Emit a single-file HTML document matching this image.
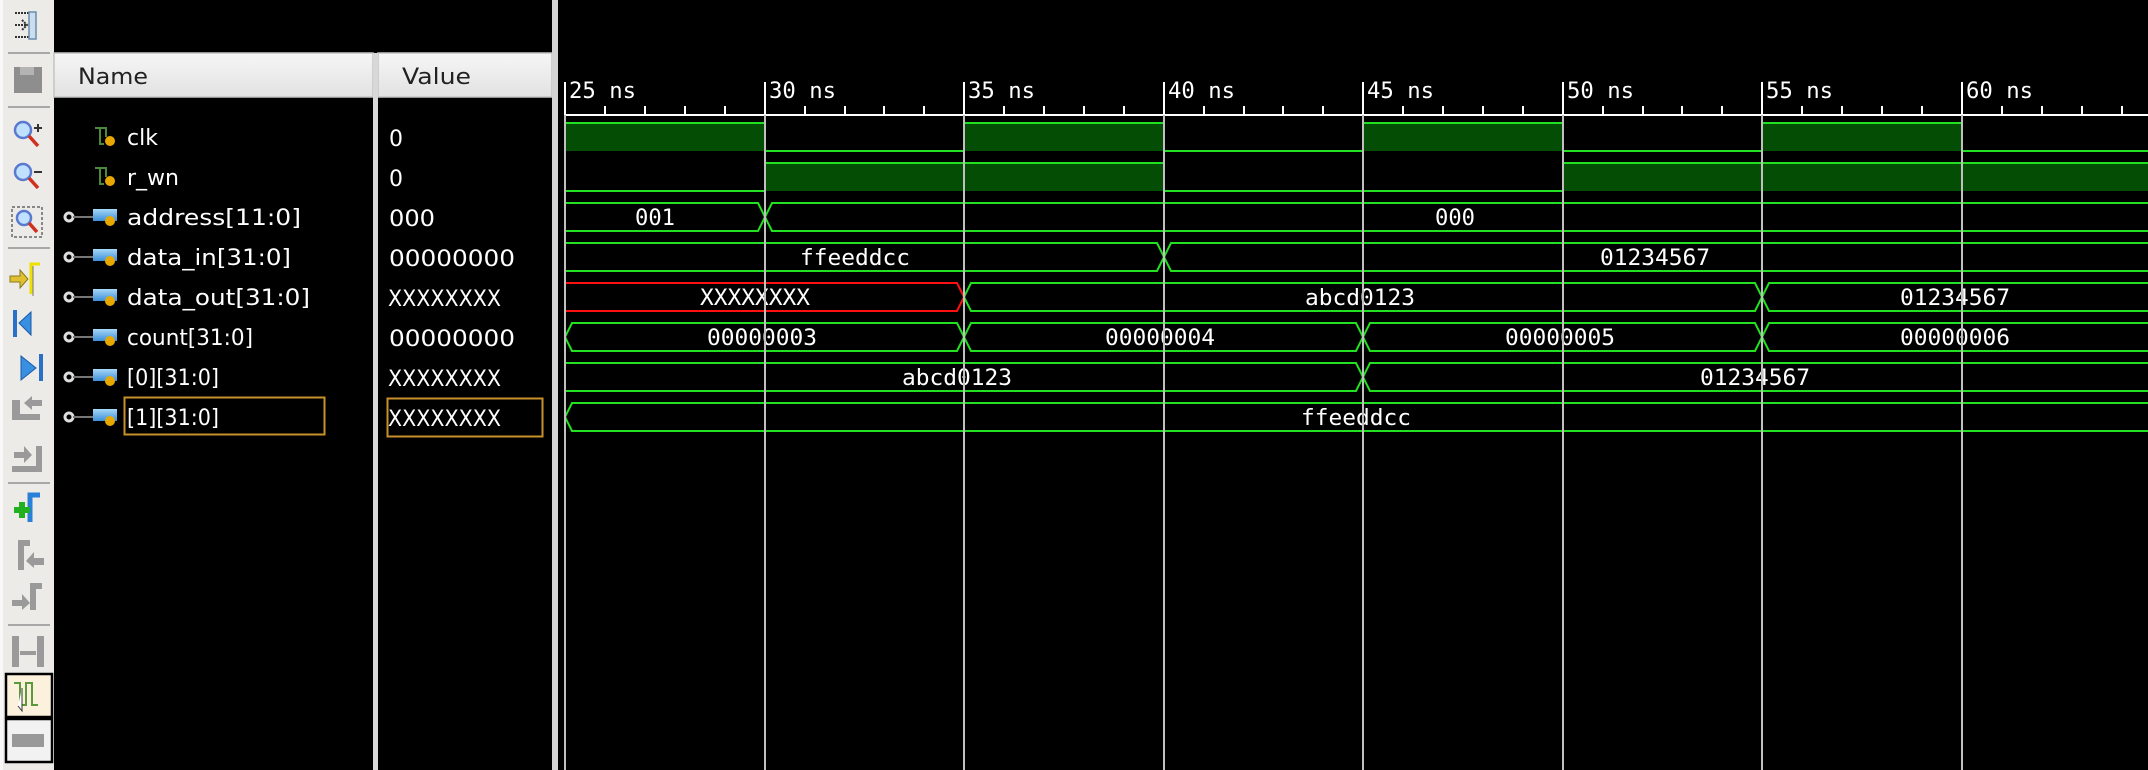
<!DOCTYPE html>
<html><head><meta charset="utf-8"><style>
html,body{margin:0;padding:0;background:#000;width:2148px;height:770px;overflow:hidden}
svg{display:block}
</style></head><body>
<svg width="2148" height="770" viewBox="0 0 2148 770" xmlns="http://www.w3.org/2000/svg">
<defs>
<linearGradient id="hdr" x1="0" y1="0" x2="0" y2="1"><stop offset="0" stop-color="#f6f6f6"/><stop offset="1" stop-color="#e2e2e2"/></linearGradient>
<linearGradient id="blu" x1="0" y1="0" x2="0" y2="1"><stop offset="0" stop-color="#a8d8f8"/><stop offset="1" stop-color="#3a8ed8"/></linearGradient>
<g id="busicon"><circle cx="69" cy="0" r="4" fill="none" stroke="#ddd" stroke-width="3"/><line x1="73" y1="0" x2="93" y2="0" stroke="#777" stroke-width="2"/><rect x="93" y="-8" width="24" height="12" fill="url(#blu)"/><circle cx="110" cy="4" r="5" fill="#e8a800"/></g>
<g id="biticon"><path d="M95,-9 H100 V7 H104 M100,-9 H106 V0" fill="none" stroke="#4a8a3a" stroke-width="2"/><circle cx="110" cy="4" r="5" fill="#e8a800"/></g>
</defs>
<rect x="0" y="0" width="54" height="770" fill="#ecebe8"/>
<rect x="0" y="0" width="3" height="770" fill="#f8f8f8"/>
<g stroke="#a8a8a8" stroke-width="2"><line x1="8" y1="53" x2="50" y2="53"/><line x1="8" y1="107" x2="50" y2="107"/><line x1="8" y1="248" x2="50" y2="248"/><line x1="8" y1="483" x2="50" y2="483"/><line x1="8" y1="625" x2="50" y2="625"/></g>
<path d="M15,13 H30 M15,37 H30 M15,25 H26 M22,20 L27,25 L22,30" stroke="#333" stroke-width="2" fill="none" stroke-dasharray="2 1"/>
<rect x="29" y="12" width="7" height="27" fill="#cde" stroke="#6a8cb0" stroke-width="1.5"/>
<rect x="14" y="67" width="28" height="26" fill="#8e8e8e"/><rect x="20" y="67" width="14" height="8" fill="#b4b4b4"/>
<g><circle cx="23" cy="130" r="8" fill="#bfe0ff" stroke="#5a7ad0" stroke-width="2.5"/><line x1="29" y1="136" x2="38" y2="146" stroke="#d03020" stroke-width="3.5"/><path d="M34,128 H42 M38,124 V132" stroke="#333" stroke-width="2"/></g>
<g><circle cx="23" cy="172" r="8" fill="#bfe0ff" stroke="#5a7ad0" stroke-width="2.5"/><line x1="29" y1="178" x2="38" y2="188" stroke="#d03020" stroke-width="3.5"/><path d="M34,172 H42" stroke="#333" stroke-width="2"/></g>
<rect x="12" y="207" width="30" height="30" fill="none" stroke="#888" stroke-width="2" stroke-dasharray="3 2"/>
<g><circle cx="24" cy="218" r="7" fill="#bfe0ff" stroke="#5a7ad0" stroke-width="2.5"/><line x1="29" y1="223" x2="37" y2="232" stroke="#d03020" stroke-width="3.5"/></g>
<path d="M10,276 H20 V270 L28,279 L20,288 V282 H10 Z" fill="#e0c030" stroke="#8a7a20" stroke-width="1"/><path d="M31,294 V264 H40" fill="none" stroke="#f0e000" stroke-width="3"/><path d="M33,296 V266" stroke="#777" stroke-width="1"/>
<path d="M15,310 V337" stroke="#2a70c8" stroke-width="4"/><path d="M31,312 L19,323 L31,335 Z" fill="#3a90e0" stroke="#1a58a8"/>
<path d="M41,354 V381" stroke="#2a70c8" stroke-width="4"/><path d="M21,356 L36,368 L21,380 Z" fill="#3a90e0" stroke="#1a58a8"/>
<g fill="#9a9a9a"><path d="M12,420 V400 H20 V414 H40 V420 Z"/><path d="M24,403 L32,396 V400 H42 V406 H32 V410 Z"/></g>
<g fill="#9a9a9a"><path d="M12,466 H36 V446 H42 V472 H12 Z"/><path d="M14,452 H24 V446 L32,455 L24,463 V458 H14 Z"/></g>
<path d="M30,522 V495 H40" fill="none" stroke="#2a80d8" stroke-width="5"/><path d="M14,510 H30 M22,502 V518" stroke="#20b020" stroke-width="6"/>
<g fill="#9a9a9a"><path d="M18,570 V540 H30 V546 H24 V570 Z"/><path d="M44,558 H34 V552 L26,561 L34,568 V565 H44 Z"/></g>
<g fill="#9a9a9a"><path d="M42,583 H30 V610 H36 V589 H42 Z"/><path d="M12,600 H22 V594 L30,603 L22,610 V606 H12 Z"/></g>
<g fill="#9a9a9a"><rect x="12" y="636" width="7" height="31"/><rect x="37" y="636" width="7" height="31"/><path d="M20,651 H36 V655 H20 Z"/></g>
<rect x="6" y="674" width="46" height="43" fill="#fbf1dd" stroke="#000" stroke-width="2.5"/>
<path d="M14,683 H20 V705 H26 V683 H32 V705 H38" fill="none" stroke="#5a9a3a" stroke-width="2"/>
<path d="M22,688 V711 L18,706" fill="#fff" stroke="#333"/>
<rect x="6" y="719" width="46" height="43" fill="#f2f2f2" stroke="#000" stroke-width="2.5"/>
<rect x="12" y="734" width="32" height="13" fill="#999"/>
<rect x="54" y="53" width="319" height="44" fill="url(#hdr)" stroke="#c4c4c4" stroke-width="1.5"/>
<rect x="378" y="53" width="174" height="44" fill="url(#hdr)" stroke="#c4c4c4" stroke-width="1.5"/>
<rect x="373" y="53" width="5" height="717" fill="#d8d8d8"/>
<rect x="552" y="0" width="6" height="770" fill="#d4d4d4"/>
<g font-family="DejaVu Sans, sans-serif" font-size="22" fill="#222">
<text x="78" y="84" textLength="70" lengthAdjust="spacingAndGlyphs">Name</text>
<text x="402" y="84" textLength="69" lengthAdjust="spacingAndGlyphs">Value</text>
</g>
<use href="#biticon" y="137"/><use href="#biticon" y="177"/>
<use href="#busicon" y="217"/><use href="#busicon" y="257"/><use href="#busicon" y="297"/><use href="#busicon" y="337"/><use href="#busicon" y="377"/><use href="#busicon" y="417"/>
<g font-family="DejaVu Sans, sans-serif" font-size="22" fill="#fff">
<text x="127" y="145">clk</text>
<text x="127" y="185">r_wn</text>
<text x="127" y="225" textLength="174" lengthAdjust="spacingAndGlyphs">address[11:0]</text>
<text x="127" y="265" textLength="164" lengthAdjust="spacingAndGlyphs">data_in[31:0]</text>
<text x="127" y="305" textLength="183" lengthAdjust="spacingAndGlyphs">data_out[31:0]</text>
<text x="127" y="345" textLength="126" lengthAdjust="spacingAndGlyphs">count[31:0]</text>
<text x="127" y="385" textLength="92" lengthAdjust="spacingAndGlyphs">[0][31:0]</text>
<text x="127" y="425" textLength="92" lengthAdjust="spacingAndGlyphs">[1][31:0]</text>
<text x="389" y="146">0</text>
<text x="389" y="186">0</text>
<text x="389" y="226" textLength="46" lengthAdjust="spacingAndGlyphs">000</text>
<text x="389" y="266" textLength="126" lengthAdjust="spacingAndGlyphs">00000000</text>
<text x="388" y="306" textLength="113" lengthAdjust="spacingAndGlyphs">XXXXXXXX</text>
<text x="389" y="346" textLength="126" lengthAdjust="spacingAndGlyphs">00000000</text>
<text x="388" y="386" textLength="113" lengthAdjust="spacingAndGlyphs">XXXXXXXX</text>
<text x="388" y="426" textLength="113" lengthAdjust="spacingAndGlyphs">XXXXXXXX</text>
</g>
<rect x="124.5" y="397.5" width="200" height="37" fill="none" stroke="#c8902a" stroke-width="2"/>
<rect x="387.5" y="398.5" width="155" height="38" fill="none" stroke="#c8902a" stroke-width="2"/>
<g stroke="#fff" stroke-width="2">
<line x1="565" y1="115" x2="2148" y2="115"/>
<path d="M565,82V115 M765,82V115 M964,82V115 M1164,82V115 M1363,82V115 M1563,82V115 M1762,82V115 M1962,82V115"/>
<path d="M605,106V115 M645,106V115 M685,106V115 M725,106V115 M805,106V115 M845,106V115 M884,106V115 M924,106V115 M1004,106V115 M1044,106V115 M1084,106V115 M1124,106V115 M1204,106V115 M1244,106V115 M1283,106V115 M1323,106V115 M1403,106V115 M1443,106V115 M1483,106V115 M1523,106V115 M1603,106V115 M1643,106V115 M1682,106V115 M1722,106V115 M1802,106V115 M1842,106V115 M1882,106V115 M1922,106V115 M2002,106V115 M2042,106V115 M2082,106V115 M2122,106V115"/>
</g>
<g font-family="DejaVu Sans Mono, monospace" font-size="22" fill="#fff">
<text x="569" y="98" textLength="67" lengthAdjust="spacingAndGlyphs">25 ns</text>
<text x="769" y="98" textLength="67" lengthAdjust="spacingAndGlyphs">30 ns</text>
<text x="968" y="98" textLength="67" lengthAdjust="spacingAndGlyphs">35 ns</text>
<text x="1168" y="98" textLength="67" lengthAdjust="spacingAndGlyphs">40 ns</text>
<text x="1367" y="98" textLength="67" lengthAdjust="spacingAndGlyphs">45 ns</text>
<text x="1567" y="98" textLength="67" lengthAdjust="spacingAndGlyphs">50 ns</text>
<text x="1766" y="98" textLength="67" lengthAdjust="spacingAndGlyphs">55 ns</text>
<text x="1966" y="98" textLength="67" lengthAdjust="spacingAndGlyphs">60 ns</text>
</g>
<g fill="#044d04">
<rect x="565" y="123" width="200" height="28"/><rect x="964" y="123" width="200" height="28"/><rect x="1363" y="123" width="200" height="28"/><rect x="1762" y="123" width="200" height="28"/>
<rect x="765" y="163" width="399" height="28"/><rect x="1563" y="163" width="585" height="28"/>
</g>
<g fill="none" stroke="#22e022" stroke-width="2">
<path d="M565,123 H765 V151 H964 V123 H1164 V151 H1363 V123 H1563 V151 H1762 V123 H1962 V151 H2148"/>
<path d="M565,191 H765 V163 H1164 V191 H1563 V163 H2148"/>
<path d="M565,203 H758 L765,217 L758,231 H565"/><path d="M2148,203 H772 L765,217 L772,231 H2148"/>
<path d="M565,243 H1157 L1164,257 L1157,271 H565"/><path d="M2148,243 H1171 L1164,257 L1171,271 H2148"/>
<path d="M964,297 L971,283 H1755 L1762,297 L1755,311 H971 Z"/><path d="M2148,283 H1769 L1762,297 L1769,311 H2148"/>
<path d="M565,337 L572,323 H957 L964,337 L957,351 H572 Z"/><path d="M964,337 L971,323 H1356 L1363,337 L1356,351 H971 Z"/><path d="M1363,337 L1370,323 H1755 L1762,337 L1755,351 H1370 Z"/><path d="M2148,323 H1769 L1762,337 L1769,351 H2148"/>
<path d="M565,363 H1356 L1363,377 L1356,391 H565"/><path d="M2148,363 H1370 L1363,377 L1370,391 H2148"/>
<path d="M2148,403 H572 L565,417 L572,431 H2148"/>
</g>
<path d="M565,283 H957 L964,297 L957,311 H565" fill="none" stroke="#ff1010" stroke-width="2"/>
<g font-family="DejaVu Sans Mono, monospace" font-size="22" fill="#fff" text-anchor="middle">
<text x="655" y="225" textLength="40" lengthAdjust="spacingAndGlyphs">001</text>
<text x="1455" y="225" textLength="40" lengthAdjust="spacingAndGlyphs">000</text>
<text x="855" y="265" textLength="110" lengthAdjust="spacingAndGlyphs">ffeeddcc</text>
<text x="1655" y="265" textLength="110" lengthAdjust="spacingAndGlyphs">01234567</text>
<text x="755" y="305" textLength="110" lengthAdjust="spacingAndGlyphs">XXXXXXXX</text>
<text x="1360" y="305" textLength="110" lengthAdjust="spacingAndGlyphs">abcd0123</text>
<text x="1955" y="305" textLength="110" lengthAdjust="spacingAndGlyphs">01234567</text>
<text x="762" y="345" textLength="110" lengthAdjust="spacingAndGlyphs">00000003</text>
<text x="1160" y="345" textLength="110" lengthAdjust="spacingAndGlyphs">00000004</text>
<text x="1560" y="345" textLength="110" lengthAdjust="spacingAndGlyphs">00000005</text>
<text x="1955" y="345" textLength="110" lengthAdjust="spacingAndGlyphs">00000006</text>
<text x="957" y="385" textLength="110" lengthAdjust="spacingAndGlyphs">abcd0123</text>
<text x="1755" y="385" textLength="110" lengthAdjust="spacingAndGlyphs">01234567</text>
<text x="1356" y="425" textLength="110" lengthAdjust="spacingAndGlyphs">ffeeddcc</text>
</g>
<g stroke="#c0c0c0" stroke-width="2">
<path d="M565,115V770 M765,115V770 M964,115V770 M1164,115V770 M1363,115V770 M1563,115V770 M1762,115V770 M1962,115V770"/>
</g>
</svg>
</body></html>
